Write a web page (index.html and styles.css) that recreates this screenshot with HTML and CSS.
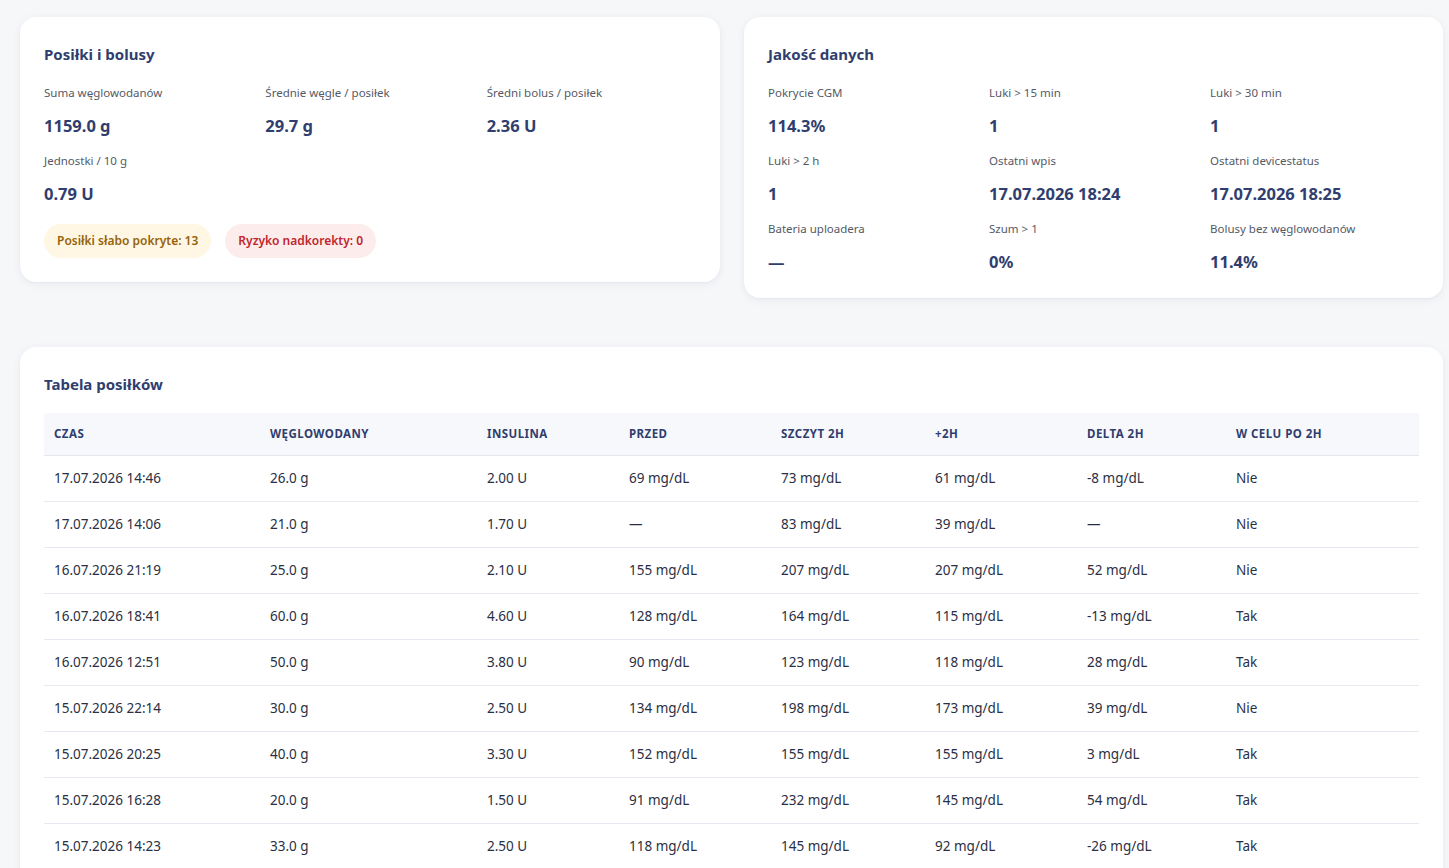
FILE: index.html
```html
<!DOCTYPE html>
<html lang="pl">
<head>
<meta charset="utf-8">
<title>Posiłki i jakość danych</title>
<link rel="stylesheet" href="styles.css">
</head>
<body>
<main class="page">
  <div class="top-row">
    <section class="card">
      <h2 class="card-title">Posiłki i bolusy</h2>
      <div class="stats">
        <div class="stat"><div class="stat-label">Suma węglowodanów</div><div class="stat-value">1159.0 g</div></div>
        <div class="stat"><div class="stat-label">Średnie węgle / posiłek</div><div class="stat-value">29.7 g</div></div>
        <div class="stat"><div class="stat-label">Średni bolus / posiłek</div><div class="stat-value">2.36 U</div></div>
        <div class="stat"><div class="stat-label">Jednostki / 10 g</div><div class="stat-value">0.79 U</div></div>
      </div>
      <div class="badges">
        <span class="badge badge-warn">Posiłki słabo pokryte: 13</span>
        <span class="badge badge-danger">Ryzyko nadkorekty: 0</span>
      </div>
    </section>
    <section class="card">
      <h2 class="card-title">Jakość danych</h2>
      <div class="stats">
        <div class="stat"><div class="stat-label">Pokrycie CGM</div><div class="stat-value">114.3%</div></div>
        <div class="stat"><div class="stat-label">Luki &gt; 15 min</div><div class="stat-value">1</div></div>
        <div class="stat"><div class="stat-label">Luki &gt; 30 min</div><div class="stat-value">1</div></div>
        <div class="stat"><div class="stat-label">Luki &gt; 2 h</div><div class="stat-value">1</div></div>
        <div class="stat"><div class="stat-label">Ostatni wpis</div><div class="stat-value">17.07.2026 18:24</div></div>
        <div class="stat"><div class="stat-label">Ostatni devicestatus</div><div class="stat-value">17.07.2026 18:25</div></div>
        <div class="stat"><div class="stat-label">Bateria uploadera</div><div class="stat-value">—</div></div>
        <div class="stat"><div class="stat-label">Szum &gt; 1</div><div class="stat-value">0%</div></div>
        <div class="stat"><div class="stat-label">Bolusy bez węglowodanów</div><div class="stat-value">11.4%</div></div>
      </div>
    </section>
  </div>

  <section class="card card-table">
    <h2 class="card-title">Tabela posiłków</h2>
    <table class="meals">
      <thead>
        <tr>
          <th class="c-time">Czas</th>
          <th class="c-carbs">Węglowodany</th>
          <th class="c-ins">Insulina</th>
          <th class="c-pre">Przed</th>
          <th class="c-peak">Szczyt 2h</th>
          <th class="c-post">+2h</th>
          <th class="c-delta">Delta 2h</th>
          <th class="c-target">W celu po 2h</th>
        </tr>
      </thead>
      <tbody>
        <tr><td>17.07.2026 14:46</td><td>26.0 g</td><td>2.00 U</td><td>69 mg/dL</td><td>73 mg/dL</td><td>61 mg/dL</td><td>-8 mg/dL</td><td>Nie</td></tr>
        <tr><td>17.07.2026 14:06</td><td>21.0 g</td><td>1.70 U</td><td>—</td><td>83 mg/dL</td><td>39 mg/dL</td><td>—</td><td>Nie</td></tr>
        <tr><td>16.07.2026 21:19</td><td>25.0 g</td><td>2.10 U</td><td>155 mg/dL</td><td>207 mg/dL</td><td>207 mg/dL</td><td>52 mg/dL</td><td>Nie</td></tr>
        <tr><td>16.07.2026 18:41</td><td>60.0 g</td><td>4.60 U</td><td>128 mg/dL</td><td>164 mg/dL</td><td>115 mg/dL</td><td>-13 mg/dL</td><td>Tak</td></tr>
        <tr><td>16.07.2026 12:51</td><td>50.0 g</td><td>3.80 U</td><td>90 mg/dL</td><td>123 mg/dL</td><td>118 mg/dL</td><td>28 mg/dL</td><td>Tak</td></tr>
        <tr><td>15.07.2026 22:14</td><td>30.0 g</td><td>2.50 U</td><td>134 mg/dL</td><td>198 mg/dL</td><td>173 mg/dL</td><td>39 mg/dL</td><td>Nie</td></tr>
        <tr><td>15.07.2026 20:25</td><td>40.0 g</td><td>3.30 U</td><td>152 mg/dL</td><td>155 mg/dL</td><td>155 mg/dL</td><td>3 mg/dL</td><td>Tak</td></tr>
        <tr><td>15.07.2026 16:28</td><td>20.0 g</td><td>1.50 U</td><td>91 mg/dL</td><td>232 mg/dL</td><td>145 mg/dL</td><td>54 mg/dL</td><td>Tak</td></tr>
        <tr><td>15.07.2026 14:23</td><td>33.0 g</td><td>2.50 U</td><td>118 mg/dL</td><td>145 mg/dL</td><td>92 mg/dL</td><td>-26 mg/dL</td><td>Tak</td></tr>
      </tbody>
    </table>
  </section>
</main>
</body>
</html>
```

FILE: styles.css
```css
* {
  box-sizing: border-box;
}

html, body {
  margin: 0;
  padding: 0;
}

body {
  background: #f6f7f9;
  font-family: "Noto Sans", "Open Sans", "DejaVu Sans", sans-serif;
  color: #2a2f45;
}

.page {
  width: 1443px;
  padding: 17px 0 0 20px;
}

.top-row {
  display: grid;
  grid-template-columns: 700px 699px;
  gap: 24px;
  align-items: start;
}

.card {
  background: #ffffff;
  border-radius: 16px;
  padding: 25px 24px 24px;
  box-shadow: 0 2px 10px rgba(30, 40, 70, 0.06), 0 1px 2px rgba(30, 40, 70, 0.04);
}

.card-title {
  margin: 0 0 18px;
  font-size: 15px;
  line-height: 24px;
  font-weight: 700;
  color: #2f3e6e;
}

.stats {
  display: grid;
  grid-template-columns: repeat(3, 1fr);
  column-gap: 12px;
  row-gap: 14px;
}

.stat-label {
  font-size: 11.5px;
  line-height: 18px;
  color: #555a66;
  margin-bottom: 12px;
}

.stat-value {
  font-size: 16.5px;
  line-height: 24px;
  font-weight: 700;
  color: #2f3e6e;
}

.badges {
  display: flex;
  gap: 14px;
  margin-top: 18px;
}

.badge {
  display: inline-block;
  height: 34px;
  line-height: 34px;
  padding: 0 13px;
  border-radius: 17px;
  font-size: 12px;
  font-weight: 600;
}

.badge-warn {
  background: #fff6e3;
  color: #94640a;
}

.badge-danger {
  background: #fdecec;
  color: #c0262d;
}

.card-table {
  margin-top: 49px;
  width: 1423px;
}

.card-table .card-title {
  margin-bottom: 17px;
}

.meals {
  width: 100%;
  border-collapse: collapse;
  table-layout: fixed;
}

.meals th {
  background: #f7f8fc;
  height: 42px;
  padding: 0 10px;
  text-align: left;
  font-size: 11.5px;
  font-weight: 700;
  letter-spacing: 0.04em;
  text-transform: uppercase;
  color: #2f3e6e;
  border-bottom: 1px solid #e4e7ee;
}

.meals td {
  height: 46px;
  padding: 0 10px;
  font-size: 13.5px;
  color: #2a2f45;
  border-bottom: 1px solid #e6e9ef;
  white-space: nowrap;
}

.c-time { width: 216px; }
.c-carbs { width: 217px; }
.c-ins { width: 142px; }
.c-pre { width: 152px; }
.c-peak { width: 154px; }
.c-post { width: 152px; }
.c-delta { width: 149px; }
.c-target { width: auto; }
```
